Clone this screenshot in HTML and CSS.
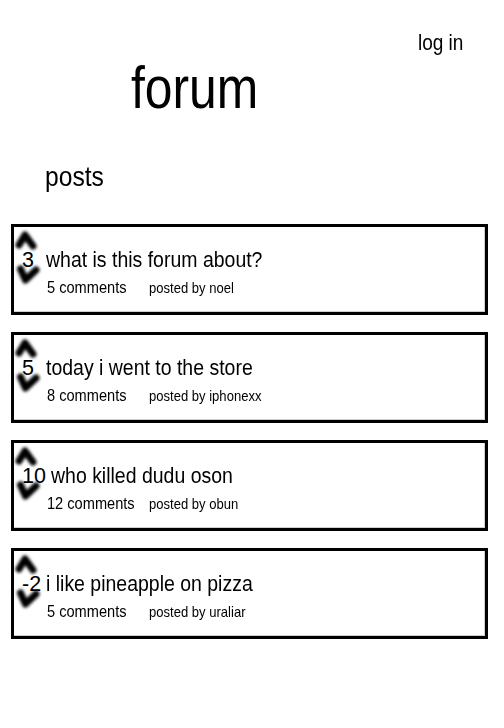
FILE: index.html
```html
<!DOCTYPE html>
<html lang="en">
<head>
<meta charset="utf-8">
<title>forum</title>
<link rel="stylesheet" href="styles.css">
</head>
<body>
<header class="top">
  <a class="login" href="#">log in</a>
</header>
<h1 class="brand"><span>forum</span></h1>
<h2 class="section"><span>posts</span></h2>
<ul class="posts">
  <li class="post">
    <svg class="vote" viewBox="0 0 30 62" width="30" height="62" aria-hidden="true"><g fill="none" stroke="#000" stroke-width="7" stroke-linecap="round" stroke-linejoin="round"><path d="M5 18 L11 8 L19 19"/><path d="M6.5 42 L11.5 53 L22 43"/></g></svg>
    <div class="headline"><span class="score">3</span><span class="title">what is this forum about?</span></div>
    <div class="meta"><span class="comments"><span>5 comments</span></span><span class="author"><span>posted by noel</span></span></div>
  </li>
  <li class="post">
    <svg class="vote" viewBox="0 0 30 62" width="30" height="62" aria-hidden="true"><g fill="none" stroke="#000" stroke-width="7" stroke-linecap="round" stroke-linejoin="round"><path d="M5 18 L11 8 L19 19"/><path d="M6.5 42 L11.5 53 L22 43"/></g></svg>
    <div class="headline"><span class="score">5</span><span class="title">today i went to the store</span></div>
    <div class="meta"><span class="comments"><span>8 comments</span></span><span class="author"><span>posted by iphonexx</span></span></div>
  </li>
  <li class="post">
    <svg class="vote" viewBox="0 0 30 62" width="30" height="62" aria-hidden="true"><g fill="none" stroke="#000" stroke-width="7" stroke-linecap="round" stroke-linejoin="round"><path d="M5 18 L11 8 L19 19"/><path d="M6.5 42 L11.5 53 L22 43"/></g></svg>
    <div class="headline"><span class="score">10</span><span class="title">who killed dudu oson</span></div>
    <div class="meta"><span class="comments"><span>12 comments</span></span><span class="author"><span>posted by obun</span></span></div>
  </li>
  <li class="post">
    <svg class="vote" viewBox="0 0 30 62" width="30" height="62" aria-hidden="true"><g fill="none" stroke="#000" stroke-width="7" stroke-linecap="round" stroke-linejoin="round"><path d="M5 18 L11 8 L19 19"/><path d="M6.5 42 L11.5 53 L22 43"/></g></svg>
    <div class="headline"><span class="score">-2</span><span class="title">i like pineapple on pizza</span></div>
    <div class="meta"><span class="comments"><span>5 comments</span></span><span class="author"><span>posted by uraliar</span></span></div>
  </li>
</ul>
</body>
</html>
```

FILE: styles.css
```css
* {
  box-sizing: border-box;
}

html, body {
  margin: 0;
  padding: 0;
  background: #fff;
}

body {
  font-family: "Liberation Sans", Arial, sans-serif;
  color: #000;
}

.top {
  display: flex;
  justify-content: flex-end;
  padding: 31px 41px 0 0;
  height: 55px;
}

.login {
  display: inline-block;
  font-size: 21.5px;
  line-height: 24px;
  color: #000;
  text-decoration: none;
  transform: scaleX(0.885);
  transform-origin: right center;
}

.brand {
  margin: 0;
  padding-left: 131px;
  font-weight: normal;
  font-size: 60px;
  line-height: 66px;
}

.brand span {
  display: inline-block;
  transform: scaleX(0.83);
  transform-origin: left center;
}

.section {
  margin: 40px 0 0;
  padding-left: 45px;
  font-weight: normal;
  font-size: 28px;
  line-height: 32px;
}

.section span {
  display: inline-block;
  transform: scaleX(0.88);
  transform-origin: left center;
}

.posts {
  list-style: none;
  margin: 31px 0 0 11px;
  padding: 0;
  width: 477px;
  display: flex;
  flex-direction: column;
  gap: 17px;
}

.post {
  position: relative;
  height: 91px;
  border: 3px solid #000;
  box-shadow: inset -1px -1px 0 #cfcfcf;
  padding: 20px 0 0 8px;
}

.vote {
  position: absolute;
  left: 0;
  top: 0;
  filter: blur(1.4px);
}

.headline {
  display: flex;
  align-items: baseline;
  height: 26px;
  line-height: 26px;
  white-space: nowrap;
}

.score {
  position: relative;
  min-width: 19px;
  margin-right: 5px;
  font-size: 21.5px;
}

.title {
  display: inline-block;
  font-size: 22px;
  transform: scaleX(0.885);
  transform-origin: left center;
}

.meta {
  display: grid;
  grid-template-columns: 102px auto;
  align-items: baseline;
  margin: 5px 0 0 25px;
  line-height: 18px;
  white-space: nowrap;
}

.comments span,
.author span {
  display: inline-block;
  transform: scaleX(0.885);
  transform-origin: left center;
}

.comments {
  font-size: 16.5px;
}

.author {
  font-size: 14.5px;
}

.author span {
  transform: scaleX(0.9);
}
```
